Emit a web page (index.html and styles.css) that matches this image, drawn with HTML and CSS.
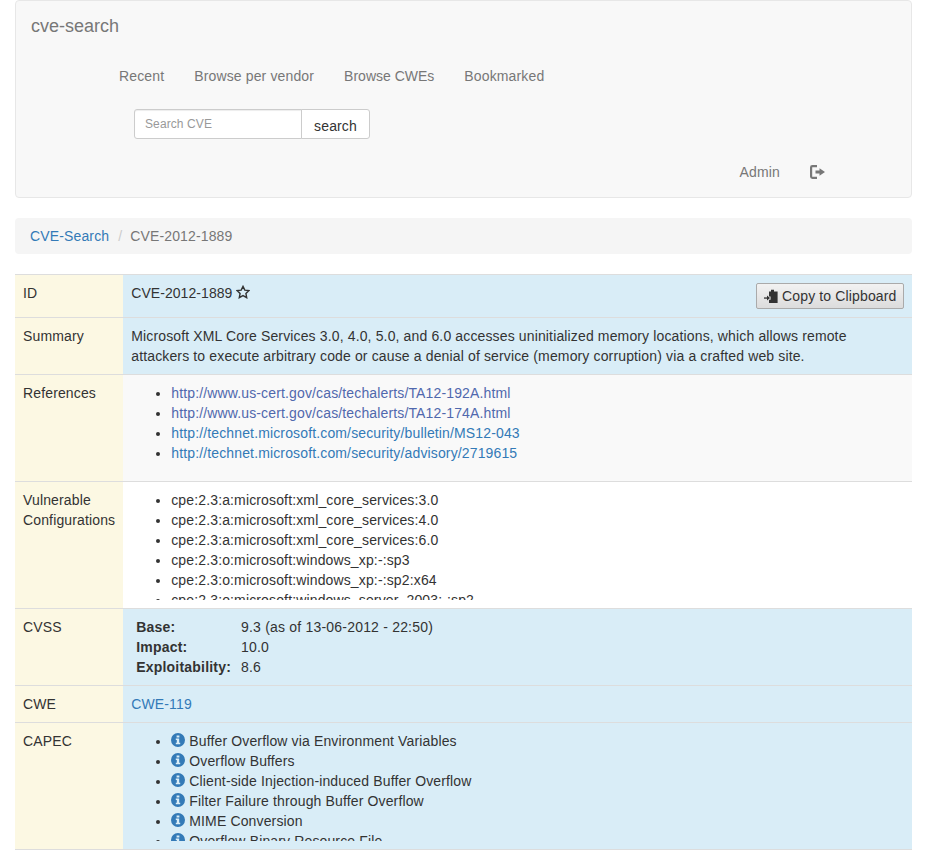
FILE: index.html
```html
<!DOCTYPE html>
<html lang="en">
<head>
<meta charset="utf-8">
<title>CVE-2012-1889 - cve-search</title>
<link rel="stylesheet" href="styles.css">
</head>
<body>
<div class="container">
  <nav class="navbar">
    <div class="brand-row"><a class="brand" href="#">cve-search</a></div>
    <ul class="nav-links">
      <li><a href="#">Recent</a></li>
      <li><a href="#">Browse per vendor</a></li>
      <li><a class="tight" href="#">Browse CWEs</a></li>
      <li><a href="#">Bookmarked</a></li>
    </ul>
    <form class="search-form">
      <input class="search-input" type="text" placeholder="Search CVE">
      <button class="search-btn" type="button">search</button>
    </form>
    <ul class="nav-right">
      <li><a href="#">Admin</a></li>
      <li><a href="#" aria-label="Log out">
        <svg class="icon logout" viewBox="0 0 15 14"><path class="logout-bracket" d="M7 1.2H2.4Q1.1 1.2 1.1 2.5V11.5Q1.1 12.8 2.4 12.8H7"/><path d="M9.5 3.2L15 7L9.5 10.8V8.5H5.5V5.5H9.5z"/></svg>
      </a></li>
    </ul>
  </nav>

  <ol class="breadcrumb">
    <li><a href="#">CVE-Search</a></li>
    <li class="sep">/</li>
    <li class="active">CVE-2012-1889</li>
  </ol>

  <table class="detail">
    <tr class="info">
      <td class="key">ID</td>
      <td>
        <button class="copy-btn" type="button">
          <svg class="icon paste" viewBox="0 0 14 14"><path d="M5 2.5H7V.8H10V2.5H13.6V14H5V10.8H6.6V7.4H5z"/><rect x="0" y="8.4" width="3" height="1.3"/><path d="M3 6.6L6 9L3 11.5z"/></svg>
          Copy to Clipboard
        </button>
        <span class="cve-id">CVE-2012-1889</span> <svg class="icon star" viewBox="0 0 14 14"><path class="star-line" d="M7 1.4L8.8 5.1L12.9 5.6L9.9 8.5L10.7 12.6L7 10.6L3.3 12.6L4.1 8.5L1.1 5.6L5.2 5.1z"/></svg>
      </td>
    </tr>
    <tr class="info">
      <td class="key">Summary</td>
      <td>Microsoft XML Core Services 3.0, 4.0, 5.0, and 6.0 accesses uninitialized memory locations, which allows remote attackers to execute arbitrary code or cause a denial of service (memory corruption) via a crafted web site.</td>
    </tr>
    <tr class="striped">
      <td class="key">References</td>
      <td>
        <div class="scroll">
          <ul>
            <li><a class="visited" href="#">http://www.us-cert.gov/cas/techalerts/TA12-192A.html</a></li>
            <li><a class="visited" href="#">http://www.us-cert.gov/cas/techalerts/TA12-174A.html</a></li>
            <li><a href="#">http://technet.microsoft.com/security/bulletin/MS12-043</a></li>
            <li><a href="#">http://technet.microsoft.com/security/advisory/2719615</a></li>
          </ul>
        </div>
      </td>
    </tr>
    <tr>
      <td class="key">Vulnerable Configurations</td>
      <td>
        <div class="scroll">
          <ul>
            <li>cpe:2.3:a:microsoft:xml_core_services:3.0</li>
            <li>cpe:2.3:a:microsoft:xml_core_services:4.0</li>
            <li>cpe:2.3:a:microsoft:xml_core_services:6.0</li>
            <li>cpe:2.3:o:microsoft:windows_xp:-:sp3</li>
            <li>cpe:2.3:o:microsoft:windows_xp:-:sp2:x64</li>
            <li>cpe:2.3:o:microsoft:windows_server_2003:-:sp2</li>
          </ul>
        </div>
      </td>
    </tr>
    <tr class="info">
      <td class="key">CVSS</td>
      <td>
        <table class="cvss">
          <tr><th>Base:</th><td>9.3 (as of 13-06-2012 - 22:50)</td></tr>
          <tr><th>Impact:</th><td>10.0</td></tr>
          <tr><th>Exploitability:</th><td>8.6</td></tr>
        </table>
      </td>
    </tr>
    <tr class="info">
      <td class="key">CWE</td>
      <td><a href="#">CWE-119</a></td>
    </tr>
    <tr class="info">
      <td class="key">CAPEC</td>
      <td>
        <div class="scroll">
          <ul>
            <li><svg class="icon info-sign" viewBox="0 0 14 14"><use href="#info"/></svg> Buffer Overflow via Environment Variables</li>
            <li><svg class="icon info-sign" viewBox="0 0 14 14"><use href="#info"/></svg> Overflow Buffers</li>
            <li><svg class="icon info-sign" viewBox="0 0 14 14"><use href="#info"/></svg> Client-side Injection-induced Buffer Overflow</li>
            <li><svg class="icon info-sign" viewBox="0 0 14 14"><use href="#info"/></svg> Filter Failure through Buffer Overflow</li>
            <li><svg class="icon info-sign" viewBox="0 0 14 14"><use href="#info"/></svg> MIME Conversion</li>
            <li><svg class="icon info-sign" viewBox="0 0 14 14"><use href="#info"/></svg> Overflow Binary Resource File</li>
          </ul>
        </div>
      </td>
    </tr>
  </table>
</div>
<svg class="defs" aria-hidden="true"><defs>
  <g id="info"><path fill-rule="evenodd" d="M7 0a7 7 0 1 1 0 14A7 7 0 0 1 7 0zM5.6 2.4v2.2h2.8V2.4zM4.8 5.6v1.5h1v2.6h-1v1.6h4.4V9.7h-1V5.6z"/></g>
</defs></svg>
</body>
</html>
```

FILE: styles.css
```css
* { box-sizing: border-box; }
html, body { margin: 0; padding: 0; }
body {
  font-family: "Liberation Sans", Arial, sans-serif;
  font-size: 14px;
  line-height: 20px;
  letter-spacing: 0.14px;
  color: #333;
  background: #fff;
}
a { color: #337ab7; text-decoration: none; }
a.visited { color: #5068ad; }
ul { margin: 0; padding: 0; list-style: none; }
.defs { position: absolute; width: 0; height: 0; }
.container { padding: 0 15px; height: 850px; overflow: hidden; }

.navbar {
  height: 198px;
  background: #f8f8f8;
  border: 1px solid #e7e7e7;
  border-radius: 4px;
  margin-bottom: 20px;
}
.brand-row { height: 50px; padding: 15px; }
.brand { font-size: 18px; letter-spacing: 0; color: #777; }
.nav-links { display: flex; height: 50px; padding-left: 88px; }
.nav-links a, .nav-right a { display: block; padding: 15px; color: #777; }
.nav-links a.tight { letter-spacing: 0; }
.search-form { display: flex; height: 46px; padding: 8px 0 8px 118px; }
.search-input {
  width: 168px;
  height: 30px;
  padding: 5px 10px;
  font: 12px/18px "Liberation Sans", Arial, sans-serif;
  letter-spacing: 0.1px;
  color: #555;
  background: #fff;
  border: 1px solid #ccc;
  border-radius: 3px 0 0 3px;
  box-shadow: inset 0 1px 1px rgba(0,0,0,.075);
  outline: 0;
}
.search-input::placeholder { color: #999; opacity: 1; }
.search-btn {
  width: 69px;
  height: 30px;
  margin-left: -1px;
  padding: 4px 0 0;
  font: 14px/20px "Liberation Sans", Arial, sans-serif;
  letter-spacing: 0.14px;
  color: #333;
  background: #fff;
  border: 1px solid #ccc;
  border-radius: 0 3px 3px 0;
}
.nav-right { display: flex; justify-content: flex-end; height: 50px; padding-right: 71px; }

.icon { display: inline-block; width: 14px; height: 14px; fill: currentColor; position: relative; }
.logout { width: 15px; vertical-align: -2px; }
.logout-bracket { fill: none; stroke: currentColor; stroke-width: 2.2; }

.breadcrumb {
  display: flex;
  height: 36px;
  margin: 0 0 20px;
  padding: 8px 15px;
  list-style: none;
  background: #f5f5f5;
  border-radius: 4px;
}
.breadcrumb .sep { padding: 0 5px; margin: 0 3px 0 4px; color: #ccc; }
.breadcrumb .active { color: #777; }

.detail { width: 100%; border-collapse: collapse; border-spacing: 0; }
.detail > tbody > tr > td {
  padding: 8px;
  vertical-align: top;
  border-top: 1px solid #ddd;
}
.detail > tbody > tr:last-child > td { border-bottom: 1px solid #ddd; }
.detail > tbody > tr > td.key { width: 108px; background: #fcf8e3; }
.detail > tbody > tr.info > td:not(.key) { background: #d9edf7; }
.detail > tbody > tr.striped > td:not(.key) { background: #f9f9f9; }

.scroll { max-height: 110px; overflow: hidden; }
.scroll ul { list-style: disc; padding-left: 40px; margin-bottom: 10px; }

.cve-id { letter-spacing: 0.06px; }
.star { vertical-align: -1px; }
.star-line { fill: none; stroke: currentColor; stroke-width: 1.4; }
.info-sign { color: #337ab7; vertical-align: -1px; }

.copy-btn {
  float: right;
  width: 148px;
  height: 26px;
  padding: 0 0 0 7px;
  text-align: left;
  font: 14px/20px "Liberation Sans", Arial, sans-serif;
  letter-spacing: 0.14px;
  color: #333;
  background: linear-gradient(#f2f2f2, #dcdcdc);
  border: 1px solid #aaa;
  border-radius: 2px;
}
.paste { vertical-align: -2px; }

.cvss { border-collapse: collapse; }
.cvss th, .cvss td { padding: 0 5px; text-align: left; vertical-align: top; letter-spacing: 0.2px; }
```
